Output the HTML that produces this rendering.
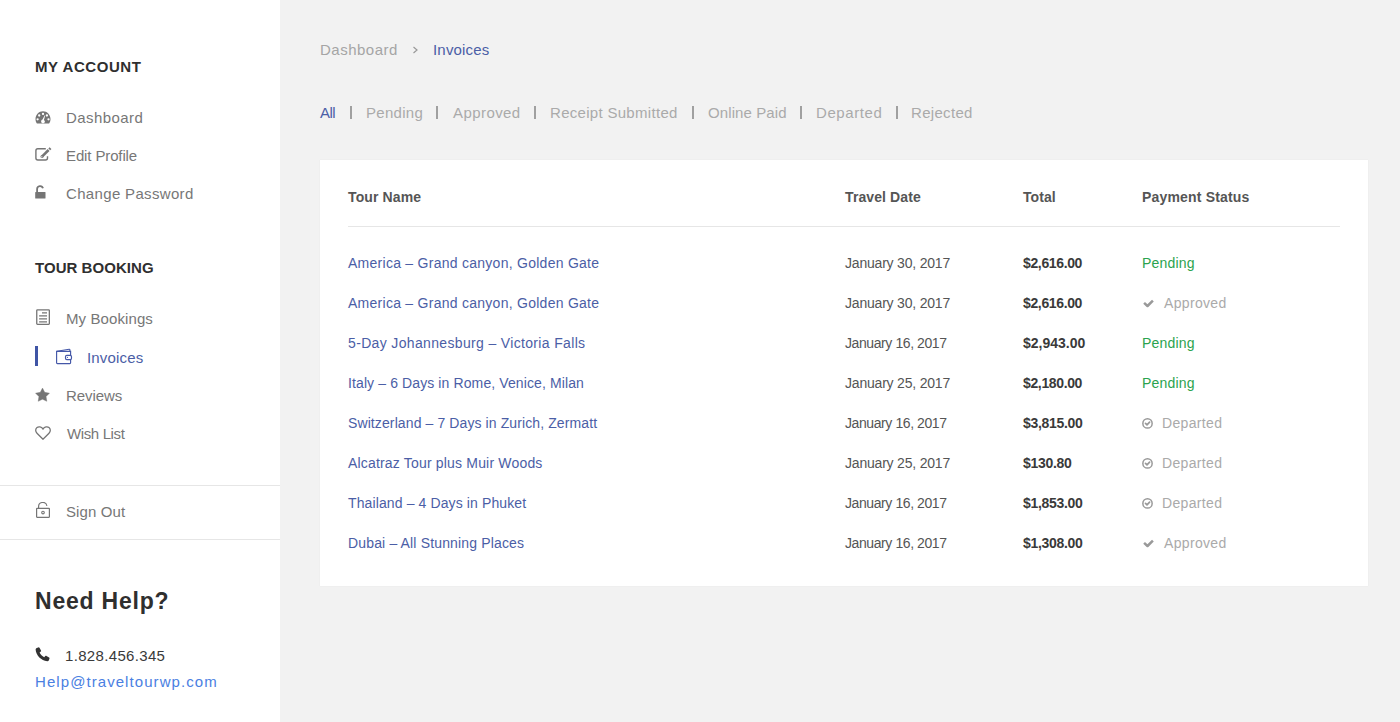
<!DOCTYPE html>
<html>
<head>
<meta charset="utf-8">
<style>
html,body{margin:0;padding:0;}
body{width:1400px;height:722px;overflow:hidden;background:#f2f2f2;font-family:"Liberation Sans",sans-serif;position:relative;}
.sb{position:absolute;left:0;top:0;width:280px;height:722px;background:#fff;}
.t{position:absolute;white-space:nowrap;line-height:20px;}
.ic{position:absolute;}
.hd{font-size:15px;font-weight:bold;color:#2f2f2f;}
.mi{font-size:15px;color:#777;}
.hr{position:absolute;left:0;width:280px;height:1px;background:#e6e6e6;}
.card{position:absolute;left:320px;top:160px;width:1048px;height:426px;background:#fff;box-shadow:0 0 1px rgba(0,0,0,0.09);}
.th{font-size:14px;font-weight:bold;color:#555;}
.tn{font-size:14px;color:#4b5ea6;}
.td{font-size:14px;color:#555;}
.tt{font-size:14px;font-weight:bold;color:#3a3a3a;}
.pend{font-size:14px;color:#2ba34e;letter-spacing:0.183px;}
.grey{font-size:14px;color:#aaa;}
.fl{font-size:15px;color:#aaa;}
.sep{font-size:15px;color:#999;}
</style>
</head>
<body>
<div class="sb">
  <div class="t hd" style="left:35px;top:57px;letter-spacing:0.556px">MY ACCOUNT</div>

  <!-- Dashboard -->
  <svg class="ic" style="left:35px;top:111px" width="16" height="13" viewBox="0 0 16 13"><path fill="#757575" d="M8 0.3C3.9 0.3 0.5 3.8 0.5 8c0 1.7 0.5 3.3 1.4 4.6h12.2c0.9-1.3 1.4-2.9 1.4-4.6C15.5 3.8 12.1 0.3 8 0.3z"/><circle cx="8" cy="2.9" r="1.15" fill="#fff"/><circle cx="4.2" cy="4.5" r="1.15" fill="#fff"/><circle cx="2.6" cy="8.3" r="1.15" fill="#fff"/><circle cx="13.5" cy="8.3" r="1.15" fill="#fff"/><circle cx="11.9" cy="4.5" r="1.15" fill="#fff"/><path fill="#fff" d="M10.2 4.4L8.9 8.9c0.6 0.3 1 0.9 1 1.5c0 1.1-0.9 1.9-1.9 1.9s-1.9-0.8-1.9-1.9c0-0.9 0.6-1.6 1.4-1.8l2.3-4.3z"/></svg>
  <div class="t mi" style="left:66px;top:108px;letter-spacing:0.438px">Dashboard</div>

  <!-- Edit Profile -->
  <svg class="ic" style="left:35px;top:147px" width="17" height="15" viewBox="0 0 17 15"><path fill="none" stroke="#757575" stroke-width="1.4" d="M10.8 1.7H2.8A2 2 0 0 0 0.9 3.7v7.3a2 2 0 0 0 2 2h7.6a2 2 0 0 0 2-2V9.3"/><path fill="none" stroke="#757575" stroke-width="2.6" d="M7.2 9.4l6.4-6.4"/><path fill="none" stroke="#757575" stroke-width="2.6" d="M14.3 2.3l1.2-1.2"/><circle cx="7" cy="9.6" r="1.5" fill="#757575"/><circle cx="6.8" cy="9.8" r="0.65" fill="#fff"/></svg>
  <div class="t mi" style="left:66px;top:146px;letter-spacing:-0.127px">Edit Profile</div>

  <!-- Change Password -->
  <svg class="ic" style="left:35px;top:185px" width="11" height="14" viewBox="0 0 11 14"><path fill="none" stroke="#757575" stroke-width="1.8" d="M2.1 7.2V4A3 3 0 0 1 8 3.3"/><rect x="0.2" y="7" width="10.3" height="6.6" rx="0.6" fill="#757575"/></svg>
  <div class="t mi" style="left:66px;top:184px;letter-spacing:0.336px">Change Password</div>

  <div class="t hd" style="left:35px;top:258px;letter-spacing:0.045px">TOUR BOOKING</div>

  <!-- My Bookings -->
  <svg class="ic" style="left:36px;top:309px" width="15" height="17" viewBox="0 0 15 17"><rect x="0.75" y="0.9" width="12.6" height="14.4" rx="0.7" fill="none" stroke="#757575" stroke-width="1.3"/><path stroke="#757575" stroke-width="1.3" d="M6 3.8h5M3.1 6.8h7.9M3.1 9.8h7.9M3.1 12.8h7.9"/></svg>
  <div class="t mi" style="left:66px;top:309px;letter-spacing:0.1px">My Bookings</div>

  <!-- Invoices active -->
  <div class="ic" style="left:35px;top:346px;width:3px;height:20px;background:#3f55a5"></div>
  <svg class="ic" style="left:56px;top:348px" width="17" height="17" viewBox="0 0 17 17"><g fill="none" stroke="#4457a8" stroke-width="1.15"><path d="M14.6 7.4V3.4H0.6V14.8a0.8 0.8 0 0 0 0.8 0.8H13.8a0.8 0.8 0 0 0 0.8-0.8V11.6"/><path d="M0.9 3.3L13.2 1.3a0.6 0.6 0 0 1 0.7 0.6V3.3"/><rect x="9.5" y="7.4" width="6" height="4.2" rx="1.3"/></g><circle cx="11.4" cy="9.4" r="0.55" fill="#4457a8"/></svg>
  <div class="t mi" style="left:87px;top:348px;color:#4b5ea6;letter-spacing:0.171px">Invoices</div>

  <!-- Reviews -->
  <svg class="ic" style="left:35px;top:388px" width="15" height="15" viewBox="0 0 15 15"><path fill="#757575" stroke="#757575" stroke-width="0.4" stroke-linejoin="round" d="M7.50 0.10 L9.70 4.37 L14.44 5.14 L11.07 8.56 L11.79 13.31 L7.50 11.15 L3.21 13.31 L3.93 8.56 L0.56 5.14 L5.30 4.37z"/></svg>
  <div class="t mi" style="left:66px;top:386px;letter-spacing:-0.083px">Reviews</div>

  <!-- Wish List -->
  <svg class="ic" style="left:35px;top:426px" width="16" height="14" viewBox="0 0 16 14"><path fill="none" stroke="#757575" stroke-width="1.3" d="M8 13.2L2 7.3C0.2 5.5 0.3 2.8 2 1.5 3.6 0.3 6.3 0.6 8 3 9.7 0.6 12.4 0.3 14 1.5c1.7 1.3 1.8 4 0 5.8z"/></svg>
  <div class="t mi" style="left:67px;top:424px;letter-spacing:-0.375px">Wish List</div>

  <div class="hr" style="top:485px"></div>

  <!-- Sign Out -->
  <svg class="ic" style="left:36px;top:502px" width="15" height="16" viewBox="0 0 15 16"><path fill="none" stroke="#757575" stroke-width="1.2" d="M2.6 6.3V4.9A4.2 4.2 0 0 1 10.9 3.8"/><rect x="0.6" y="6.3" width="12.8" height="9" rx="0.5" fill="none" stroke="#757575" stroke-width="1.2"/><circle cx="7" cy="10.6" r="1.3" fill="none" stroke="#757575" stroke-width="1.1"/></svg>
  <div class="t mi" style="left:66px;top:502px;letter-spacing:0.1px">Sign Out</div>

  <div class="hr" style="top:539px"></div>

  <div class="t" style="left:35px;top:587px;font-size:23px;line-height:28px;font-weight:bold;color:#2f2f2f;letter-spacing:0.778px">Need Help?</div>

  <!-- Phone -->
  <svg class="ic" style="left:35px;top:647px" width="15" height="15" viewBox="0 0 15 15"><path fill="#333" d="M3.3 0.4c0.5-0.2 1 0 1.2 0.4l1.5 2.6c0.2 0.4 0.1 0.9-0.2 1.2L4.6 5.6c0.9 1.9 2.6 3.7 4.6 4.7l1.1-1.2c0.3-0.3 0.8-0.4 1.2-0.2l2.6 1.5c0.4 0.2 0.6 0.7 0.4 1.2l-0.6 1.6c-0.3 0.7-1 1.1-1.7 1C6.2 13.8 1.1 8.7 0.6 2.6c0-0.7 0.4-1.4 1-1.7z"/></svg>
  <div class="t" style="left:65px;top:646px;font-size:15px;color:#3a3a3a;letter-spacing:0.333px">1.828.456.345</div>
  <div class="t" style="left:35px;top:672px;font-size:15px;color:#4a80e2;letter-spacing:1.07px">Help@traveltourwp.com</div>
</div>

<!-- Breadcrumb -->
<div class="t" style="left:320px;top:40px;font-size:15px;color:#a5a5a5;letter-spacing:0.5px">Dashboard</div>
<svg class="ic" style="left:412px;top:46px" width="7" height="8" viewBox="0 0 7 8"><path fill="none" stroke="#999" stroke-width="1.2" d="M1.5 1l3.5 3-3.5 3"/></svg>
<div class="t" style="left:433px;top:40px;font-size:15px;color:#4b5ea6;letter-spacing:0.186px">Invoices</div>

<!-- Filters -->
<div class="t" style="left:320px;top:103px;font-size:15px;color:#4b5ea6;letter-spacing:-0.6px">All</div>
<div class="ic" style="left:350px;top:106px;width:2px;height:13px;background:#a0a0a0"></div>
<div class="t fl" style="left:366px;top:103px;letter-spacing:0.3px">Pending</div>
<div class="ic" style="left:436px;top:106px;width:2px;height:13px;background:#a0a0a0"></div>
<div class="t fl" style="left:453px;top:103px;letter-spacing:0.429px">Approved</div>
<div class="ic" style="left:534px;top:106px;width:2px;height:13px;background:#a0a0a0"></div>
<div class="t fl" style="left:550px;top:103px;letter-spacing:0.3px">Receipt Submitted</div>
<div class="ic" style="left:692px;top:106px;width:2px;height:13px;background:#a0a0a0"></div>
<div class="t fl" style="left:708px;top:103px;letter-spacing:0.1px">Online Paid</div>
<div class="ic" style="left:800px;top:106px;width:2px;height:13px;background:#a0a0a0"></div>
<div class="t fl" style="left:816px;top:103px;letter-spacing:0.6px">Departed</div>
<div class="ic" style="left:896px;top:106px;width:2px;height:13px;background:#a0a0a0"></div>
<div class="t fl" style="left:911px;top:103px;letter-spacing:0.314px">Rejected</div>

<div class="card">
  <div class="t th" style="left:28px;top:27px;letter-spacing:0.125px">Tour Name</div>
  <div class="t th" style="left:525px;top:27px;letter-spacing:0.1px">Travel Date</div>
  <div class="t th" style="left:703px;top:27px;letter-spacing:0.05px">Total</div>
  <div class="t th" style="left:822px;top:27px;letter-spacing:0.177px">Payment Status</div>
  <div class="ic" style="left:28px;top:66px;width:992px;height:1px;background:#e6e6e6"></div>
  <div class="t tn" style="left:28px;top:93px;letter-spacing:0.265px">America – Grand canyon, Golden Gate</div>
  <div class="t td" style="left:525px;top:93px;letter-spacing:-0.2px">January 30, 2017</div>
  <div class="t tt" style="left:703px;top:93px;letter-spacing:-0.362px">$2,616.00</div>
  <div class="t pend" style="left:822px;top:93px">Pending</div>
  <div class="t tn" style="left:28px;top:133px;letter-spacing:0.265px">America – Grand canyon, Golden Gate</div>
  <div class="t td" style="left:525px;top:133px;letter-spacing:-0.2px">January 30, 2017</div>
  <div class="t tt" style="left:703px;top:133px;letter-spacing:-0.362px">$2,616.00</div>
  <svg class="ic" style="left:823px;top:139px" width="11" height="9" viewBox="0 0 11 9"><path fill="none" stroke="#999" stroke-width="2.5" stroke-linejoin="round" d="M1.1 3.8l3.4 3.2 5.4-5.4"/></svg>
  <div class="t grey" style="left:844px;top:133px;letter-spacing:0.329px">Approved</div>
  <div class="t tn" style="left:28px;top:173px;letter-spacing:0.344px">5-Day Johannesburg – Victoria Falls</div>
  <div class="t td" style="left:525px;top:173px;letter-spacing:-0.413px">January 16, 2017</div>
  <div class="t tt" style="left:703px;top:173px;letter-spacing:0.0px">$2,943.00</div>
  <div class="t pend" style="left:822px;top:173px">Pending</div>
  <div class="t tn" style="left:28px;top:213px;letter-spacing:0.111px">Italy – 6 Days in Rome, Venice, Milan</div>
  <div class="t td" style="left:525px;top:213px;letter-spacing:-0.2px">January 25, 2017</div>
  <div class="t tt" style="left:703px;top:213px;letter-spacing:-0.362px">$2,180.00</div>
  <div class="t pend" style="left:822px;top:213px">Pending</div>
  <div class="t tn" style="left:28px;top:253px;letter-spacing:0.105px">Switzerland – 7 Days in Zurich, Zermatt</div>
  <div class="t td" style="left:525px;top:253px;letter-spacing:-0.413px">January 16, 2017</div>
  <div class="t tt" style="left:703px;top:253px;letter-spacing:-0.312px">$3,815.00</div>
  <svg class="ic" style="left:822px;top:258px" width="11" height="11" viewBox="0 0 11 11"><circle cx="5.5" cy="5.4" r="4.65" fill="none" stroke="#999" stroke-width="1.5"/><path fill="none" stroke="#999" stroke-width="1.7" stroke-linecap="round" stroke-linejoin="round" d="M3.5 5.4l1.5 1.4 2.6-2.6"/></svg>
  <div class="t grey" style="left:842px;top:253px;letter-spacing:0.343px">Departed</div>
  <div class="t tn" style="left:28px;top:293px;letter-spacing:0.179px">Alcatraz Tour plus Muir Woods</div>
  <div class="t td" style="left:525px;top:293px;letter-spacing:-0.2px">January 25, 2017</div>
  <div class="t tt" style="left:703px;top:293px;letter-spacing:-0.317px">$130.80</div>
  <svg class="ic" style="left:822px;top:298px" width="11" height="11" viewBox="0 0 11 11"><circle cx="5.5" cy="5.4" r="4.65" fill="none" stroke="#999" stroke-width="1.5"/><path fill="none" stroke="#999" stroke-width="1.7" stroke-linecap="round" stroke-linejoin="round" d="M3.5 5.4l1.5 1.4 2.6-2.6"/></svg>
  <div class="t grey" style="left:842px;top:293px;letter-spacing:0.343px">Departed</div>
  <div class="t tn" style="left:28px;top:333px;letter-spacing:0.115px">Thailand – 4 Days in Phuket</div>
  <div class="t td" style="left:525px;top:333px;letter-spacing:-0.413px">January 16, 2017</div>
  <div class="t tt" style="left:703px;top:333px;letter-spacing:-0.312px">$1,853.00</div>
  <svg class="ic" style="left:822px;top:338px" width="11" height="11" viewBox="0 0 11 11"><circle cx="5.5" cy="5.4" r="4.65" fill="none" stroke="#999" stroke-width="1.5"/><path fill="none" stroke="#999" stroke-width="1.7" stroke-linecap="round" stroke-linejoin="round" d="M3.5 5.4l1.5 1.4 2.6-2.6"/></svg>
  <div class="t grey" style="left:842px;top:333px;letter-spacing:0.343px">Departed</div>
  <div class="t tn" style="left:28px;top:373px;letter-spacing:0.154px">Dubai – All Stunning Places</div>
  <div class="t td" style="left:525px;top:373px;letter-spacing:-0.413px">January 16, 2017</div>
  <div class="t tt" style="left:703px;top:373px;letter-spacing:-0.312px">$1,308.00</div>
  <svg class="ic" style="left:823px;top:379px" width="11" height="9" viewBox="0 0 11 9"><path fill="none" stroke="#999" stroke-width="2.5" stroke-linejoin="round" d="M1.1 3.8l3.4 3.2 5.4-5.4"/></svg>
  <div class="t grey" style="left:844px;top:373px;letter-spacing:0.329px">Approved</div>
</div>
</body>
</html>
